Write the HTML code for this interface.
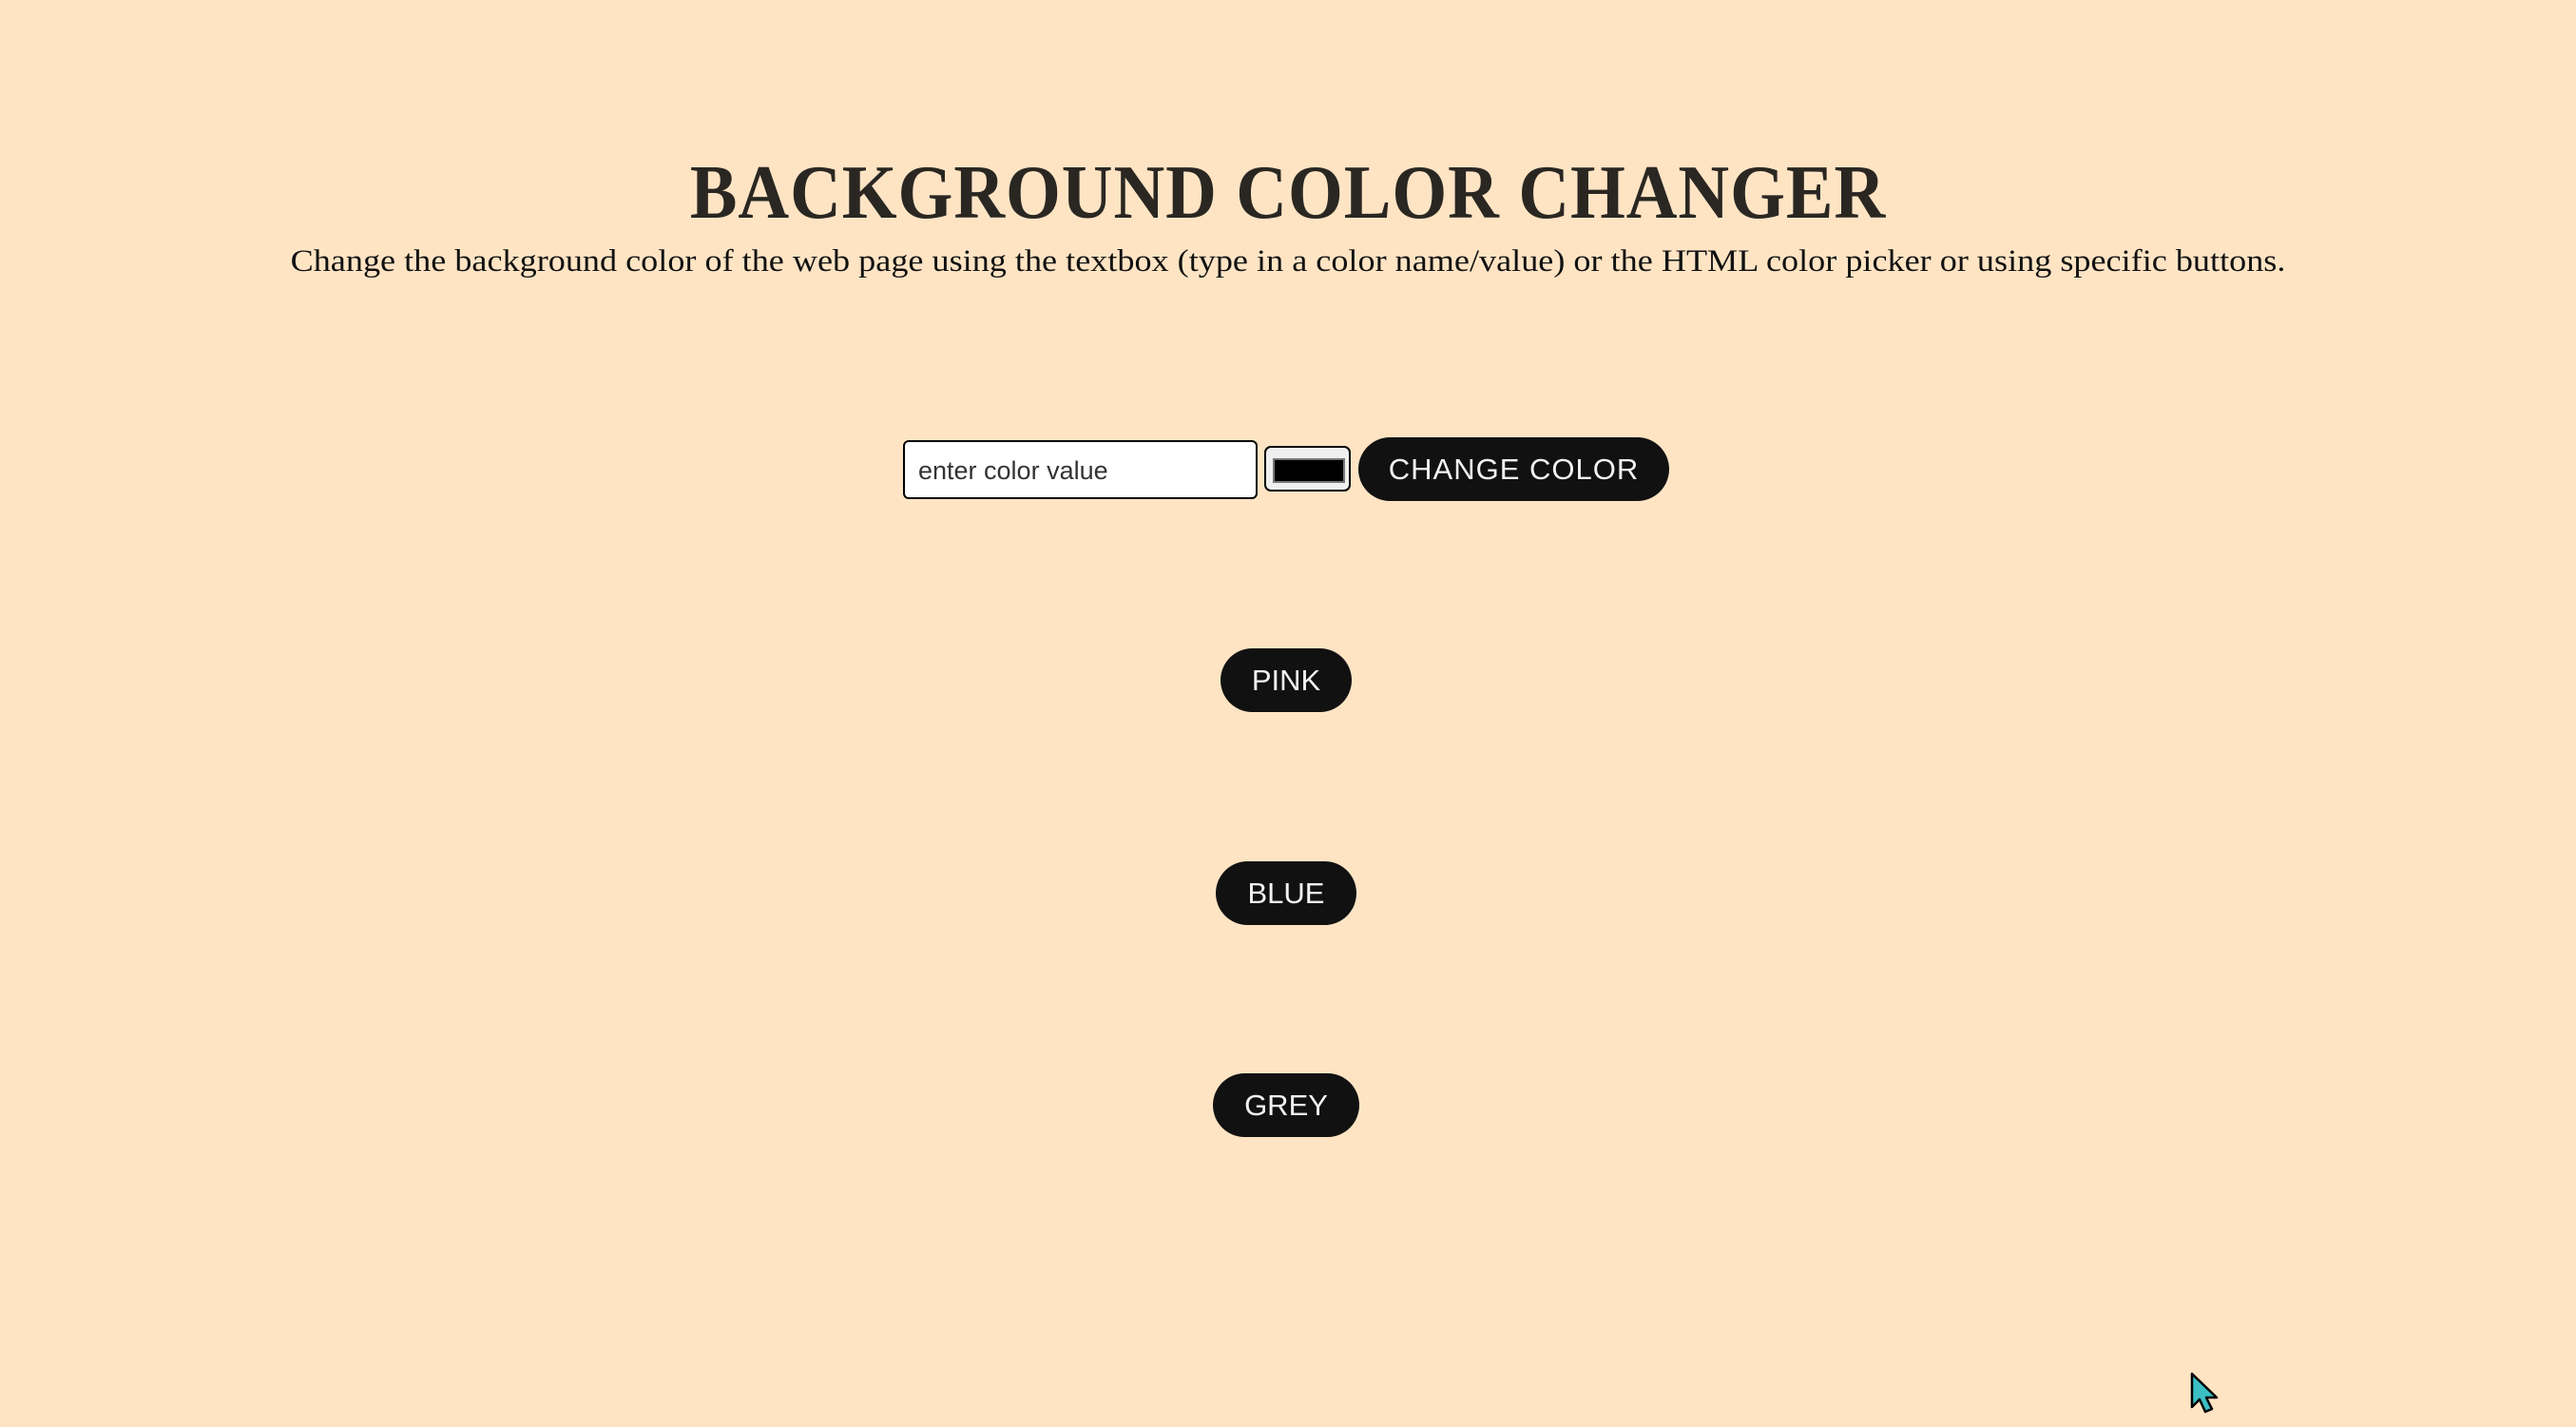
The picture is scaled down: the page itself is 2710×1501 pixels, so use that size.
<!DOCTYPE html>
<html><head><meta charset="utf-8"><style>
html,body{margin:0;padding:0;}
body{width:2710px;height:1501px;background:#ffe4c4;position:relative;overflow:hidden;}
.t{position:absolute;left:0;width:2710px;text-align:center;white-space:nowrap;font-family:"Liberation Serif",serif;}
h1.t{margin:0;top:155px;font-size:80px;line-height:96px;font-weight:bold;color:#2a2722;letter-spacing:1px;transform:scaleX(0.93);transform-origin:1355px 0;}
p.t{margin:0;top:254px;font-size:33px;line-height:42px;color:#111;transform:scaleX(1.096);transform-origin:1355px 0;}
.inp{position:absolute;left:950px;top:463px;width:373px;height:62px;background:#fff;border:2px solid #000;border-radius:6px;box-sizing:border-box;font-family:"Liberation Sans",sans-serif;font-size:27px;line-height:60px;padding-left:14px;color:#333;}
.col{position:absolute;left:1330px;top:469px;width:91px;height:48px;background:#efefef;border:2px solid #000;border-radius:7px;box-sizing:border-box;}
.col div{position:absolute;left:7px;top:11px;width:72px;height:22px;background:#000;border:2px solid #777;}
.b{position:absolute;background:#111;color:#f2f2f2;border-radius:34px;font-family:"Liberation Sans",sans-serif;font-size:31px;text-align:center;height:67px;line-height:67px;}
</style></head><body>
<h1 class="t">BACKGROUND COLOR CHANGER</h1>
<p class="t">Change the background color of the web page using the textbox (type in a color name/value) or the HTML color picker or using specific buttons.</p>
<div class="inp">enter color value</div>
<div class="col"><div></div></div>
<div class="b" style="left:1429px;top:460px;width:327px;letter-spacing:1px">CHANGE COLOR</div>
<div class="b" style="left:1284px;top:682px;width:138px">PINK</div>
<div class="b" style="left:1279px;top:906px;width:148px">BLUE</div>
<div class="b" style="left:1276px;top:1129px;width:154px">GREY</div>
<svg style="position:absolute;left:2300px;top:1440px" width="40" height="50" viewBox="0 0 40 50"><path d="M6 5 L6 40 L14 32 L20 45 L27 42 L21 30 L32 30 Z" fill="#3bbfc4" stroke="#000" stroke-width="2.5" stroke-linejoin="round"/></svg>
</body></html>
